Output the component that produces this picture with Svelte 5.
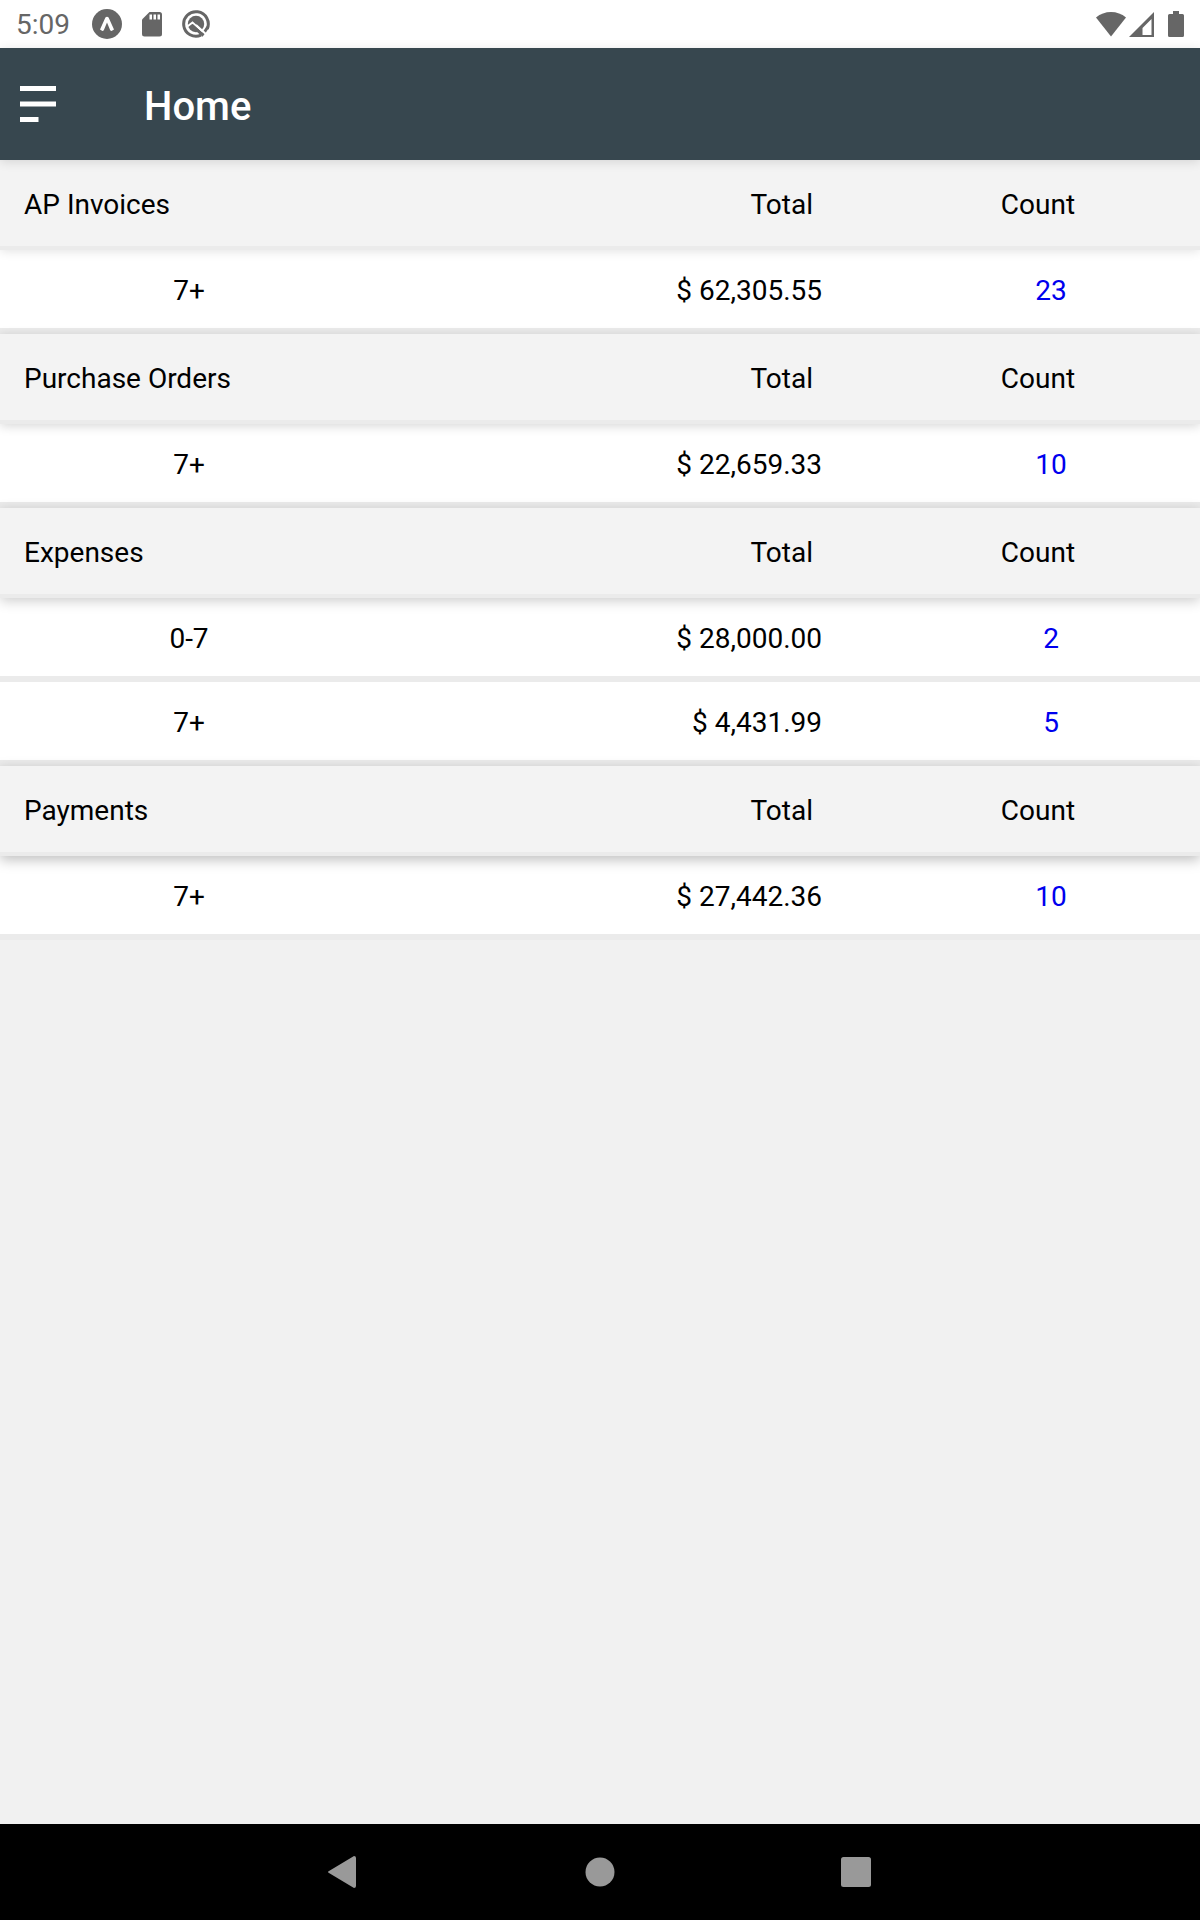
<script>
  const sections = [
    { name: "AP Invoices", rows: [{ age: "7+", total: "$ 62,305.55", count: 23 }] },
    { name: "Purchase Orders", rows: [{ age: "7+", total: "$ 22,659.33", count: 10 }] },
    {
      name: "Expenses",
      rows: [
        { age: "0-7", total: "$ 28,000.00", count: 2 },
        { age: "7+", total: "$ 4,431.99", count: 5 }
      ]
    },
    { name: "Payments", rows: [{ age: "7+", total: "$ 27,442.36", count: 10 }] }
  ];
</script>

<div class="screen">
  <div class="status">
    <span class="time">5:09</span>
    <svg class="expo" width="30" height="30" viewBox="0 0 30 30">
      <circle cx="15" cy="15" r="15" />
      <path class="cut" d="M8 20.6 13.4 8.6q1.6-1.6 3.2 0L22 20.6l-2.4 1.4q-1 0-1.5-1L15 13.4 11.9 21q-.5 1-1.5 1z" />
    </svg>
    <svg class="card" width="20" height="26" viewBox="0 0 20 26">
      <path d="M7.5 1H17.5Q20 1 20 3.5V23q0 2.5-2.5 2.5h-15Q0 25.5 0 23V8.500z" />
      <path class="cut" d="M7.500 3.500h2.500v5H7.500zM11.500 3.500h2.500v5H11.500zM15.500 3.500h2.500v5H15.500z" />
    </svg>
    <svg class="scan" width="28" height="28" viewBox="0 0 28 28">
      <path class="line" d="M19 25.2A12.3 12.3 0 1 1 25.2 19" />
      <circle cx="14" cy="14" r="8.2" />
      <path class="cutline" d="M4 17.500 10.500 12.500 25 26" />
      <path class="line" d="M10 15.500 21.500 25.500M21.500 23.500 25.800 17" />
      <path class="cutline" d="M14 15 26 26" />
    </svg>
    <span class="spacer"></span>
    <svg class="wifi" width="30" height="25" viewBox="0 0 30 25">
      <path d="M0 5.500Q6.500 0 15 0t15 5.500L15 24.500z" />
    </svg>
    <svg class="signal" width="25" height="25" viewBox="0 0 25 25">
      <path fill-rule="evenodd" d="M25 0V25H0zM22.500 7 13.500 16V23h9z" />
    </svg>
    <svg class="battery" width="16" height="26" viewBox="0 0 16 26">
      <path d="M5 0h6v3h3.500q1.500 0 1.500 1.500v20q0 1.500-1.500 1.500h-13Q0 26 0 24.500v-20Q0 3 1.500 3H5z" />
    </svg>
  </div>

  <header>
    <button class="menu" aria-label="Menu">
      <svg width="36" height="36" viewBox="0 0 36 36">
        <path d="M0 0h36v5H0zM0 15.500h36v5H0zM0 31h18.500v5H0z" />
      </svg>
    </button>
    <h1>Home</h1>
  </header>

  <main>
    <table>
      <colgroup>
        <col class="age" />
        <col />
        <col class="count" />
      </colgroup>
      {#each sections as section}
        <tbody>
          <tr class="head">
            <th scope="col">{section.name}</th>
            <th scope="col">Total</th>
            <th scope="col">Count</th>
          </tr>
          {#each section.rows as row}
            <tr>
              <td>{row.age}</td>
              <td>{row.total}</td>
              <td><a href="#list">{row.count}</a></td>
            </tr>
          {/each}
        </tbody>
      {/each}
    </table>
  </main>

  <nav>
    <button aria-label="Back">
      <svg width="32" height="32" viewBox="0 0 32 32">
        <path d="M26 0q2 0 2 2v28q0 2-2 2L1 17q-2-1 0-2z" />
      </svg>
    </button>
    <button aria-label="Home">
      <svg width="32" height="32" viewBox="0 0 32 32"><circle cx="16" cy="16" r="14.500" /></svg>
    </button>
    <button aria-label="Recent apps">
      <svg width="32" height="32" viewBox="0 0 32 32"><rect x="1" y="1" width="30" height="30" rx="2.500" /></svg>
    </button>
  </nav>
</div>

<style>
  :global(body) {
    margin: 0;
  }

  .screen {
    display: flex;
    flex-direction: column;
    min-height: 100vh;
    background: #f1f1f1;
    font: 28px/32px Roboto, sans-serif;
    color: #000;
  }

  button {
    display: flex;
    align-items: center;
    justify-content: center;
    padding: 0;
    border: 0;
    background: none;
    cursor: pointer;
  }

  /* Status bar */
  .status {
    display: flex;
    align-items: center;
    height: 48px;
    padding: 0 16px;
    background: #fff;
    color: #666;
    fill: #666;
  }
  .time {
    margin-right: 22px;
    padding-top: 2px;
  }
  .expo,
  .card {
    margin-right: 20px;
  }
  .spacer {
    flex: 1;
  }
  .signal {
    margin: 0 14px 0 3px;
  }
  .cut {
    fill: #fff;
  }
  .line {
    fill: none;
    stroke: #666;
    stroke-width: 3;
  }
  .cutline {
    fill: none;
    stroke: #fff;
    stroke-width: 2;
  }

  /* App bar */
  header {
    position: relative;
    z-index: 1;
    display: flex;
    align-items: center;
    height: 112px;
    padding: 0 20px;
    background: #37474f;
    box-shadow: 0 2px 10px rgba(0, 0, 0, 0.12);
  }
  .menu {
    margin-right: 88px;
    fill: #fff;
  }
  h1 {
    margin: 0;
    padding-top: 6px;
    font-size: 40px;
    font-weight: 500;
    line-height: 48px;
    color: #fff;
  }

  /* Totals */
  main {
    flex: 1;
  }
  table {
    width: 100%;
    table-layout: fixed;
    border-spacing: 0;
  }
  .age {
    width: 32%;
  }
  .count {
    width: 25%;
  }
  .head {
    position: relative;
    box-shadow: 0 3px 12px rgba(0, 0, 0, 0.2);
  }
  /* the shadow gets deeper further down the list */
  tbody:nth-of-type(1) .head {
    box-shadow: 0 1px 10px rgba(0, 0, 0, 0.12);
  }
  tbody:nth-of-type(2) .head {
    box-shadow: 0 2px 10px rgba(0, 0, 0, 0.16);
  }
  tbody:nth-of-type(4) .head {
    box-shadow: 0 4px 12px rgba(0, 0, 0, 0.25);
  }
  th,
  td {
    box-sizing: border-box;
    height: 84px;
    padding: 4px 6px 0 0;
    border-bottom: 6px solid #ebebeb;
    background: #fff;
    font-weight: 400;
    text-align: center;
  }
  th {
    height: 90px;
    border-bottom-width: 4px;
    background: #f3f3f3;
  }
  th:first-child {
    padding-left: 24px;
    text-align: left;
  }
  td:nth-child(2) {
    padding-right: 78px;
    text-align: right;
  }
  th:nth-child(2) {
    padding-right: 87px;
    text-align: right;
  }
  td:last-child {
    padding: 4px 0 0 2px;
  }
  th:last-child {
    padding-right: 24px;
  }
  a {
    color: #00e;
    text-decoration: none;
  }

  /* Navigation bar */
  nav {
    display: flex;
    align-items: center;
    justify-content: center;
    gap: 160px;
    height: 96px;
    background: #000;
    fill: #999;
  }
  nav button {
    width: 96px;
    height: 96px;
  }
</style>
